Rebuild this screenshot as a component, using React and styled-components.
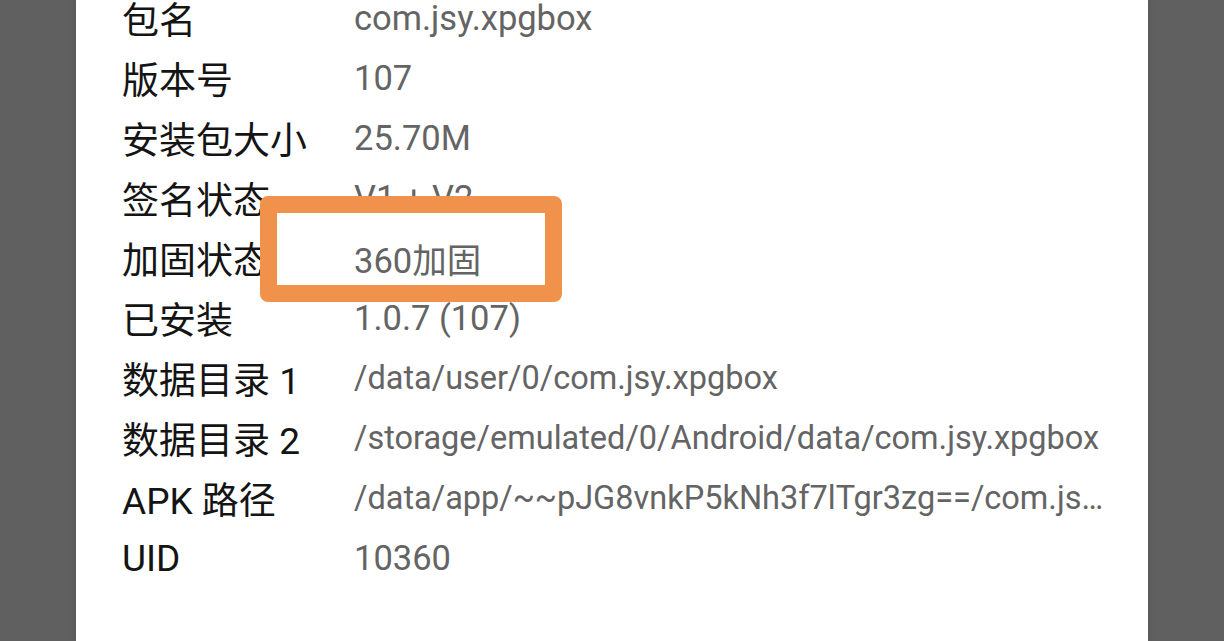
import React from 'react';
import styled, { createGlobalStyle } from 'styled-components';

const GlobalStyle = createGlobalStyle`
  html, body {
    margin: 0;
    padding: 0;
    height: 100%;
    overflow: hidden;
    background: #606060;
  }
  #root {
    height: 100%;
  }
`;

const Screen = styled.div`
  height: 100%;
  display: flex;
  background: #606060;
`;

const Sheet = styled.div`
  position: relative;
  margin-left: 76px;
  width: 1072px;
  height: 100%;
  background: #ffffff;
  padding: 0 42px 0 46px;
  box-sizing: border-box;
  box-shadow: 0 0 6px rgba(0, 0, 0, 0.12);
`;

const InfoList = styled.dl`
  margin: -12px 0 0;
  display: grid;
  grid-template-columns: 232px minmax(0, 1fr);
  grid-auto-rows: 60px;
  align-items: center;
`;

const Label = styled.dt`
  margin: 0;
  font-family: Roboto, 'Noto Sans CJK SC', sans-serif;
  font-size: 37px;
  color: #141414;
  white-space: nowrap;
`;

const Value = styled.dd`
  margin: 0;
  font-family: Roboto, 'Noto Sans CJK SC', sans-serif;
  font-size: ${p => (p.$path ? 32.5 : 34.5)}px;
  color: #646464;
  white-space: nowrap;
  overflow: hidden;
  text-overflow: ellipsis;
`;

const Highlight = styled.div`
  position: absolute;
  left: 184px;
  top: 196px;
  width: 302px;
  height: 106px;
  box-sizing: border-box;
  border: 17px solid #f0924c;
  border-radius: 8px;
  pointer-events: none;
`;

const rows = [
  ['包名', 'com.jsy.xpgbox'],
  ['版本号', '107'],
  ['安装包大小', '25.70M'],
  ['签名状态', 'V1 + V2'],
  ['加固状态', '360加固'],
  ['已安装', '1.0.7 (107)'],
  ['数据目录 1', '/data/user/0/com.jsy.xpgbox', true],
  ['数据目录 2', '/storage/emulated/0/Android/data/com.jsy.xpgbox', true],
  ['APK 路径', '/data/app/~~pJG8vnkP5kNh3f7lTgr3zg==/com.jsy.xpgbox-1/base.apk', true],
  ['UID', '10360'],
];

const App = () => (
  <Screen>
    <GlobalStyle />
    <Sheet>
      <InfoList>
        {rows.map(([label, value, path]) => (
          <React.Fragment key={label}>
            <Label>{label}</Label>
            <Value $path={path}>{value}</Value>
          </React.Fragment>
        ))}
      </InfoList>
      <Highlight />
    </Sheet>
  </Screen>
);

export default App;
